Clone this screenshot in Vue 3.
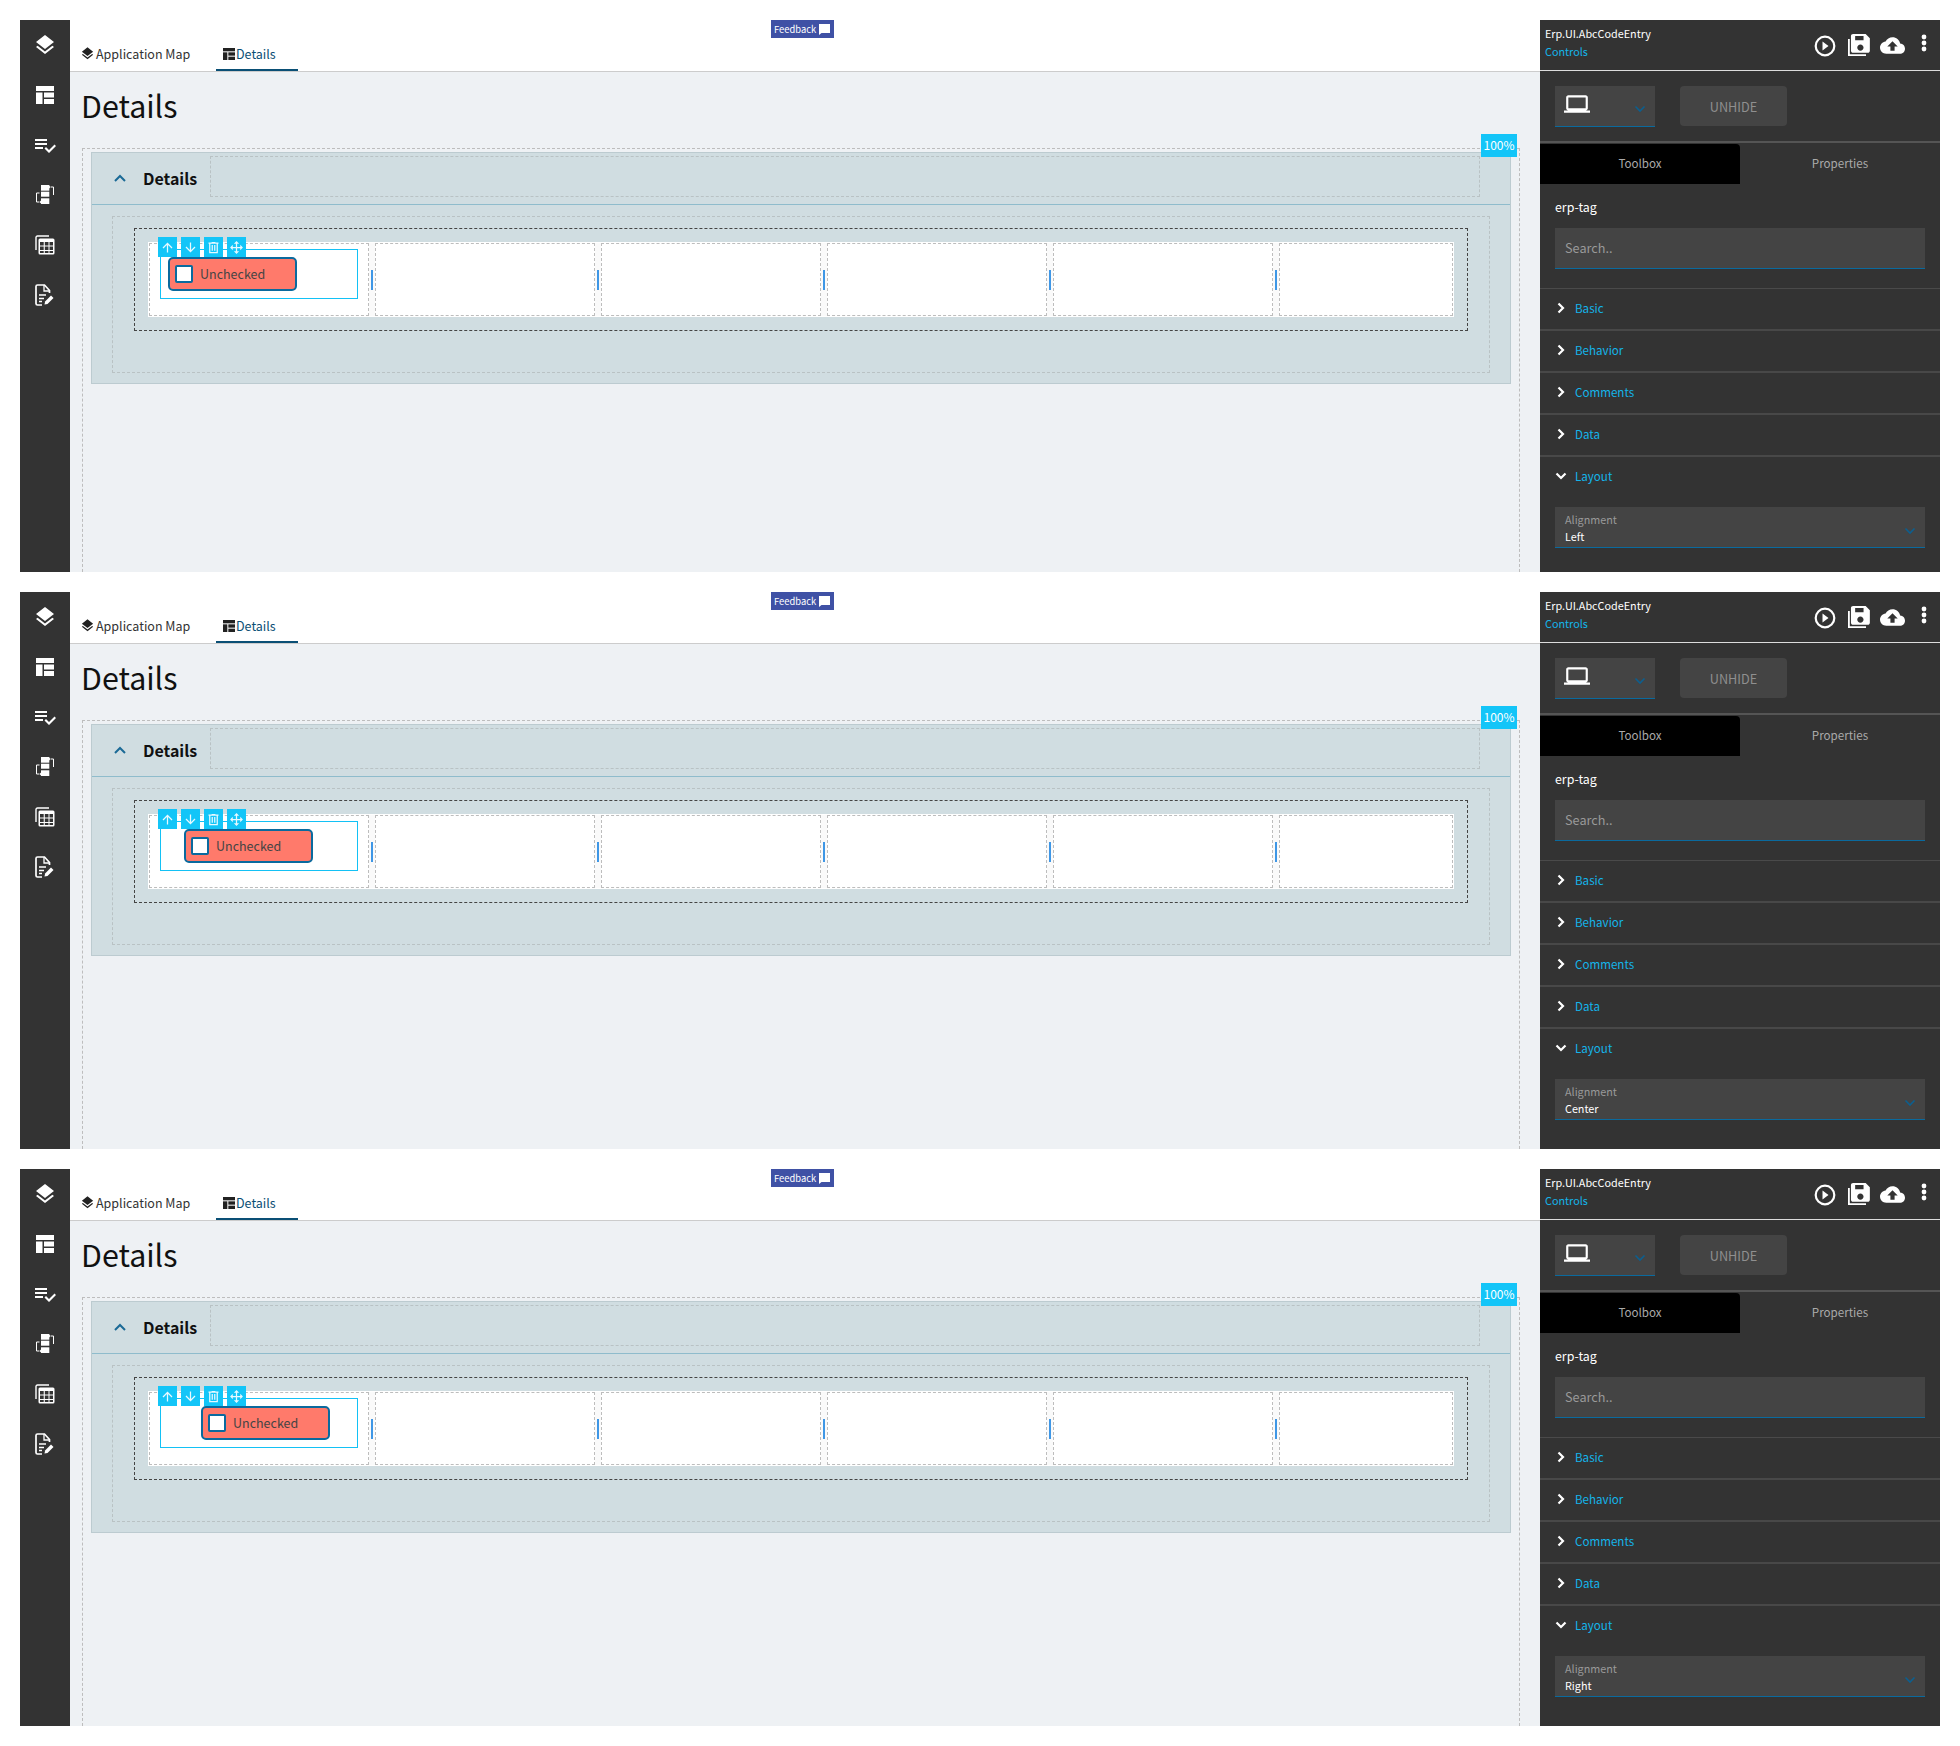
<template>
  <div class="page">
    <section
      v-for="panel in panels"
      :key="panel.align"
      class="panel"
      :style="{ height: panel.height + 'px' }"
    >
      <aside class="rail">
        <div v-for="item in railIcons" :key="item.name" class="rail-item">
          <svg v-if="item.name === 'layers'" width="24" height="24" viewBox="0 0 24 24" fill="#fff"><path :d="icons.layers" /></svg>
          <svg v-else-if="item.name === 'table'" width="18" height="18" viewBox="0 0 18 18" fill="#fff">
            <rect width="18" height="5" />
            <rect y="6.5" width="6.5" height="11.5" />
            <rect x="8" y="6.5" width="10" height="5" />
            <rect x="8" y="13" width="10" height="5" />
          </svg>
          <svg v-else-if="item.name === 'check'" width="24" height="24" viewBox="0 0 24 24" fill="#fff"><path :d="icons.check" /></svg>
          <svg v-else-if="item.name === 'flow'" width="20" height="20" viewBox="0 0 20 20" fill="#fff">
            <rect x="6" y="0" width="8.300" height="5.700" />
            <rect x="6" y="6.700" width="8.300" height="5" />
            <rect x="6" y="13.300" width="8.300" height="5.700" />
            <path d="M15.500 2H18.500v8M4.500 8H1.500v9h3" fill="none" stroke="#fff" stroke-width="1" />
            <path d="M15 0.500v3l-1.500-1.500zM5 15.500v3l1.500-1.500z" />
          </svg>
          <svg v-else-if="item.name === 'grid'" width="20" height="20" viewBox="0 0 20 20">
            <path d="M1 15V2.500C1 1.600 1.600 1 2.500 1H14" fill="none" stroke="#fff" stroke-width="1.400" />
            <rect x="3.500" y="3.500" width="16" height="16" rx="1.500" fill="#fff" />
            <path d="M5 7h3.700v3.500H5zM9.800 7h3.700v3.500H9.800zM14.500 7h3.500v3.500h-3.500zM5 11.500h3.700V15H5zM9.800 11.500h3.700V15H9.800zM14.500 11.500h3.500V15h-3.500zM5 16h3.700v2H5zM9.800 16h3.700v2H9.800zM14.500 16h3.500v2h-3.500z" fill="#333" />
          </svg>
          <svg v-else width="20" height="22" viewBox="0 0 20 22" fill="none" stroke="#fff">
            <path d="M14.500 9V6.500L9.500 1H2.500C1.500 1 1 1.500 1 2.500v17C1 20.500 1.500 21 2.500 21H7" stroke-width="1.700" />
            <path d="M9 1v6h5.500" stroke-width="1.300" />
            <path d="M4 11h7M4 14.500h5M4 17.500h3" stroke-width="1.600" />
            <path d="M9.500 20.500l.6-3L16 11.500l2.500 2.500-6 6z" fill="#fff" stroke="none" />
          </svg>
        </div>
      </aside>

      <main class="main">
        <header class="tabs">
          <div class="tab tab-map">
            <svg width="15" height="15" viewBox="0 0 24 24" fill="#222"><path :d="icons.layers" /></svg>
            <span>Application Map</span>
          </div>
          <div class="tab tab-details">
            <svg width="12" height="12" viewBox="0 0 18 18" fill="#222">
              <rect width="18" height="5" />
              <rect y="6.500" width="6.500" height="11.500" />
              <rect x="8" y="6.500" width="10" height="5" />
              <rect x="8" y="13" width="10" height="5" />
            </svg>
            <span>Details</span>
          </div>
          <div class="feedback">
            <span>Feedback</span>
            <svg width="11" height="11" viewBox="0 0 11 11" fill="#fff"><path d="M0 0h11v9H2.500L0 11z" /></svg>
          </div>
        </header>

        <div class="body">
          <h1 class="title">Details</h1>
          <div class="canvas">
            <div class="zoom-badge">100%</div>
            <div class="card">
              <div class="card-head">
                <svg class="card-chevron" width="14" height="9" viewBox="0 0 14 9" fill="none" stroke="#1b6a96" stroke-width="2"><path d="M2 7l5-5 5 5" /></svg>
                <strong class="card-title">Details</strong>
                <div class="card-slot"></div>
              </div>
              <div class="card-body">
                <div class="drop-zone">
                  <div class="row">
                    <template v-for="(cell, i) in 6" :key="cell">
                      <div class="cell" :class="{ last: i === 5 }">
                        <div v-if="i === 0" class="selected">
                          <div class="tools">
                            <button v-for="tool in tools" :key="tool.name" class="tool" type="button">
                              <svg width="15" height="15" viewBox="0 0 24 24" fill="#e8f9ff"><path :d="tool.path" /></svg>
                            </button>
                          </div>
                          <div class="tag" :style="{ marginLeft: panel.tagLeft + 'px' }">
                            <span class="tag-check"></span>
                            <span class="tag-label">Unchecked</span>
                          </div>
                        </div>
                      </div>
                      <div v-if="i < 5" class="gutter"><span class="handle"></span></div>
                    </template>
                  </div>
                </div>
              </div>
            </div>
          </div>
        </div>
      </main>

      <aside class="side">
        <div class="side-head">
          <div class="side-names">
            <div class="side-title">Erp.UI.AbcCodeEntry</div>
            <div class="side-sub">Controls</div>
          </div>
          <div class="side-actions">
            <svg class="act-play" width="22" height="22" viewBox="0 0 22 22">
              <circle cx="11" cy="11" r="9.300" fill="none" stroke="#fff" stroke-width="2.200" />
              <path d="M8.500 6.500L14.500 11l-6 4.500z" fill="#fff" />
            </svg>
            <svg class="act-save" width="24" height="24" viewBox="0 0 24 24" fill="#fff">
              <path d="M1 6v17h18v-1.800H2.800V6z" />
              <path :d="icons.save" transform="translate(0.800 -2.200) scale(1.050)" />
            </svg>
            <svg class="act-cloud" width="25" height="25" viewBox="0 0 24 24" fill="#fff"><path :d="icons.cloud" /></svg>
            <svg class="act-more" width="6" height="18" viewBox="0 0 6 18" fill="#fff">
              <circle cx="3" cy="3" r="2.400" />
              <circle cx="3" cy="9" r="2.400" />
              <circle cx="3" cy="15" r="2.400" />
            </svg>
          </div>
        </div>

        <div class="side-tools">
          <div class="device">
            <svg width="26" height="26" viewBox="0 0 24 24" fill="#fff"><path :d="icons.laptop" /></svg>
            <svg class="blue-chevron" width="12" height="8" viewBox="0 0 12 8" fill="none" stroke="#0c5f8f" stroke-width="1.600"><path d="M1.500 1.500L6 6l4.500-4.500" /></svg>
          </div>
          <div class="unhide">UNHIDE</div>
        </div>

        <div class="side-tabs">
          <div class="side-tab active">Toolbox</div>
          <div class="side-tab">Properties</div>
        </div>

        <div class="search-block">
          <div class="search-label">erp-tag</div>
          <div class="search">Search..</div>
        </div>

        <div v-for="name in sections" :key="name" class="section">
          <svg width="8" height="12" viewBox="0 0 8 12" fill="none" stroke="#fff" stroke-width="2.200"><path d="M1.500 1.500L6 6l-4.500 4.500" /></svg>
          <span>{{ name }}</span>
        </div>

        <div class="section open">
          <svg width="12" height="8" viewBox="0 0 12 8" fill="none" stroke="#fff" stroke-width="2.200"><path d="M1.500 1.500L6 6l4.500-4.500" /></svg>
          <span>Layout</span>
        </div>

        <div class="select">
          <div class="select-label">Alignment</div>
          <div class="select-value">{{ panel.align }}</div>
          <svg class="blue-chevron select-chevron" width="12" height="8" viewBox="0 0 12 8" fill="none" stroke="#0c5f8f" stroke-width="1.600"><path d="M1.500 1.500L6 6l4.500-4.500" /></svg>
        </div>
      </aside>
    </section>
  </div>
</template>

<script setup>
const panels = [
  { align: 'Left', height: 552, tagLeft: 7 },
  { align: 'Center', height: 557, tagLeft: 23 },
  { align: 'Right', height: 557, tagLeft: 40 },
];

const railIcons = [
  { name: 'layers' },
  { name: 'table' },
  { name: 'check' },
  { name: 'flow' },
  { name: 'grid' },
  { name: 'file' },
];

const sections = ['Basic', 'Behavior', 'Comments', 'Data'];

const icons = {
  layers: 'M11.99 18.54l-7.37-5.73L3 14.07l9 7 9-7-1.63-1.27-7.38 5.74zM12 16l7.36-5.73L21 9l-9-7-9 7 1.63 1.27L12 16z',
  check: 'M14 10H2v2h12v-2zm0-4H2v2h12V6zM2 16h8v-2H2v2zm19.5-4.5L23 13l-6.99 7-4.51-4.5L13 14l3.01 3 5.49-5.5z',
  save: 'M17 3H5c-1.11 0-2 .9-2 2v14c0 1.1.89 2 2 2h14c1.1 0 2-.9 2-2V7l-4-4zm-5 16c-1.66 0-3-1.34-3-3s1.34-3 3-3 3 1.340 3 3-1.34 3-3 3zm3-10H7V5h8v4z',
  cloud: 'M19.35 10.04C18.67 6.59 15.64 4 12 4 9.11 4 6.6 5.64 5.35 8.04 2.34 8.36 0 10.91 0 14c0 3.31 2.69 6 6 6h13c2.76 0 5-2.24 5-5 0-2.64-2.05-4.78-4.65-4.96zM14 13v4h-4v-4H7l5-5 5 5h-3z',
  laptop: 'M20 18c1.100 0 1.990-.9 1.990-2L22 6c0-1.100-.9-2-2-2H4c-1.100 0-2 .9-2 2v10c0 1.100.9 2 2 2H0v2h24v-2h-4zM4 6h16v10H4V6z',
};

const tools = [
  { name: 'up', path: 'M13 20h-2V8l-5.500 5.500-1.420-1.420L12 4.160l7.920 7.920-1.420 1.420L13 8v12z' },
  { name: 'down', path: 'M11 4h2v12l5.500-5.500 1.420 1.420L12 19.840l-7.920-7.920L5.500 10.500 11 16V4z' },
  { name: 'delete', path: 'M9 3v1H4v2h1v15h14V6h1V4h-5V3H9zM7 6h10v13H7V6zm2 2v9h2V8H9zm4 0v9h2V8h-2z' },
  { name: 'move', path: 'M13 6v5h5V7.750L22.250 12 18 16.250V13h-5v5h3.250L12 22.250 7.750 18H11v-5H6v3.250L1.750 12 6 7.750V11h5V6H7.750L12 1.750 16.250 6H13z' },
];
</script>

<style>
html,
body {
  background: #fff;
}
</style>

<style scoped>
.page {
  display: flex;
  flex-direction: column;
  gap: 20px;
  padding: 20px;
  font-family: "Noto Sans CJK SC", "Noto Sans", sans-serif;
  font-size: 14px;
}

.panel {
  display: flex;
  overflow: hidden;
}

/* left rail */
.rail {
  width: 50px;
  flex: none;
  background: #333;
}
.rail-item {
  height: 50px;
  display: flex;
  align-items: center;
  justify-content: center;
}

/* middle */
.main {
  flex: 1;
  min-width: 0;
  display: flex;
  flex-direction: column;
  background: #eef1f4;
}
.tabs {
  position: relative;
  height: 52px;
  flex: none;
  box-sizing: border-box;
  padding: 18px 0 0 10px;
  display: flex;
  background: #fff;
  border-bottom: 1px solid #ccc;
}
.tab {
  height: 33px;
  box-sizing: border-box;
  display: flex;
  align-items: center;
  gap: 1px;
  font-size: 12.500px;
  line-height: 20px;
  color: #333;
  border-bottom: 2px solid transparent;
}
.tab-map {
  width: 136px;
}
.tab-details {
  width: 82px;
  padding-left: 7px;
  color: #0a4f75;
  border-bottom-color: #0a4f75;
}
.feedback {
  position: absolute;
  left: 701px;
  top: 0;
  width: 63px;
  height: 18px;
  box-sizing: border-box;
  padding: 0 4px 0 3px;
  display: flex;
  align-items: center;
  justify-content: space-between;
  background: #3f51a5;
  color: #fff;
  font-size: 9.400px;
  line-height: 18px;
}

.body {
  flex: 1;
  min-height: 0;
  display: flex;
  flex-direction: column;
}
.title {
  margin: 0;
  height: 76px;
  flex: none;
  box-sizing: border-box;
  padding: 12px 0 0 11px;
  font-size: 30.400px;
  font-weight: 400;
  line-height: 42px;
  color: #111;
}
.canvas {
  position: relative;
  flex: 1;
  margin: 0 20px 0 12px;
  padding: 3px 8px 0;
  border: 1px dashed #bdbdbd;
  border-bottom: none;
}
.zoom-badge {
  position: absolute;
  right: 2px;
  top: -15px;
  width: 36px;
  height: 23px;
  background: #13c5f8;
  color: #fff;
  font-size: 12px;
  line-height: 22px;
  text-align: center;
}
.card {
  background: #d0dde1;
  border: 1px solid #bccbd0;
}
.card-head {
  height: 52px;
  box-sizing: border-box;
  display: flex;
  align-items: center;
  border-bottom: 1px solid #8fbccc;
}
.card-chevron {
  margin-left: 21px;
}
.card-title {
  margin: -2px 0 0 16px;
  width: 67px;
  font-size: 16px;
  font-weight: 600;
  color: #111;
  line-height: 24px;
}
.card-slot {
  width: 1270px;
  height: 41px;
  margin-top: -5px;
  box-sizing: border-box;
  border: 1px dashed #b9c2c4;
}
.card-body {
  margin: 11px 20px 10px;
  padding: 11px 21px 41px;
  border: 1px dashed #b9c2c4;
}
.drop-zone {
  padding: 13px;
  border: 1px dashed #444;
}
.row {
  display: flex;
  height: 73px;
  padding: 1px;
  background: #fff;
}
.cell {
  width: 220px;
  flex: none;
  box-sizing: border-box;
  border: 1px dashed #bdbdbd;
}
.cell.last {
  width: auto;
  flex: 1;
}
.gutter {
  width: 6px;
  flex: none;
  display: flex;
  align-items: center;
  justify-content: center;
  background: #fafafa;
}
.handle {
  width: 2px;
  height: 20px;
  background: #3f97e6;
}
.selected {
  position: relative;
  margin: 5px 10px 0;
  height: 50px;
  box-sizing: border-box;
  border: 1px solid #13c1f5;
  padding-top: 7px;
}
.tools {
  position: absolute;
  left: -3px;
  top: -13px;
  display: flex;
  gap: 4px;
}
.tool {
  width: 19px;
  height: 20px;
  padding: 0;
  border: none;
  display: flex;
  align-items: center;
  justify-content: center;
  background: #13c5f8;
}
.tag {
  width: 129px;
  height: 34px;
  box-sizing: border-box;
  display: flex;
  align-items: center;
  padding-left: 5px;
  background: #ff7a6b;
  border: 2px solid #0a6a9e;
  border-radius: 5px;
}
.tag-check {
  width: 18px;
  height: 18px;
  box-sizing: border-box;
  background: #fff;
  border: 2px solid #0a6a9e;
  border-radius: 2px;
}
.tag-label {
  margin-left: 7px;
  font-size: 12.500px;
  line-height: 20px;
  color: #444;
}

/* right panel */
.side {
  width: 400px;
  flex: none;
  background: #333;
  color: #fff;
}
.side-head {
  height: 51px;
  box-sizing: border-box;
  display: flex;
  justify-content: space-between;
  border-bottom: 1px solid #ddd;
}
.side-names {
  padding: 5px 0 0 5px;
}
.side-title {
  font-size: 10.800px;
  line-height: 17px;
}
.side-sub {
  margin-top: 1px;
  font-size: 10.800px;
  line-height: 17px;
  color: #13b5ea;
}
.side-actions {
  display: flex;
  align-items: center;
  padding-right: 13px;
}
.act-play {
  margin: 2px 11px 0 1px;
}
.act-save {
  margin-right: 9px;
}
.act-cloud {
  margin-right: 16px;
}
.act-more {
  margin-top: -4px;
}
.side-tools {
  height: 70px;
  box-sizing: border-box;
  padding: 15px 0 0 15px;
  display: flex;
  gap: 25px;
}
.device {
  position: relative;
  width: 100px;
  height: 41px;
  box-sizing: border-box;
  padding: 5px 0 0 9px;
  background: #444;
  border-bottom: 1px solid #0a6a9e;
}
.blue-chevron {
  position: absolute;
  right: 9px;
  top: 19px;
}
.unhide {
  width: 107px;
  height: 40px;
  background: #444;
  border-radius: 4px;
  color: #8f8f8f;
  font-size: 12.700px;
  line-height: 41px;
  text-align: center;
}
.side-tabs {
  display: flex;
  height: 43px;
  box-sizing: border-box;
  padding-top: 1px;
  border-top: 2px solid #555;
}
.side-tab {
  width: 200px;
  height: 40px;
  color: #aaa;
  font-size: 11.600px;
  line-height: 39px;
  text-align: center;
}
.side-tab.active {
  background: #000;
  border-top-right-radius: 4px;
}
.search-block {
  height: 105px;
  box-sizing: border-box;
  padding: 13px 15px 0;
  border-bottom: 1px solid #4a4a4a;
}
.search-label {
  height: 31px;
  font-size: 12.400px;
  line-height: 20px;
}
.search {
  height: 41px;
  box-sizing: border-box;
  padding-left: 10px;
  background: #444;
  border-bottom: 1px solid #0a6a9e;
  color: #999;
  font-size: 12.700px;
  line-height: 40px;
}
.section {
  height: 42px;
  box-sizing: border-box;
  padding: 0 0 2px 17px;
  display: flex;
  align-items: center;
  border-bottom: 2px solid #484848;
  color: #13b5ea;
  font-size: 11.600px;
  line-height: 20px;
}
.section span {
  margin-left: 10px;
}
.section.open {
  height: 40px;
  padding: 0 0 2px 15px;
  border-bottom: none;
}
.section.open span {
  margin-left: 8px;
}
.select {
  position: relative;
  margin: 10px 15px 0;
  height: 41px;
  box-sizing: border-box;
  padding: 4px 10px 0;
  background: #444;
  border-bottom: 1px solid #0a6a9e;
}
.select-label {
  color: #999;
  font-size: 10.800px;
  line-height: 17px;
}
.select-value {
  font-size: 10.800px;
  line-height: 17px;
}
.select-chevron {
  top: 20px;
}
</style>
